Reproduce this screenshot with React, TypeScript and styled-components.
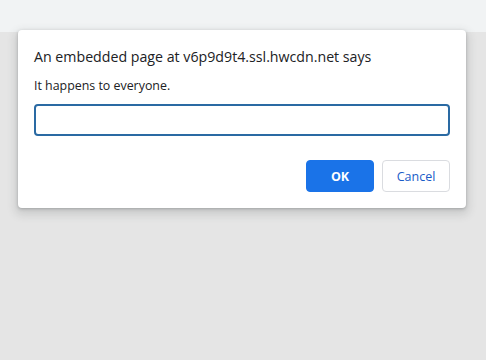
import React from 'react'
import styled, {createGlobalStyle} from 'styled-components'

const Global = createGlobalStyle`
    html, body {
        margin: 0;
        padding: 0;
        width: 486px;
        height: 360px;
        overflow: hidden;
        font-family: "Open Sans", "Noto Sans", sans-serif;
    }
`

const Page = styled.div`
    position: relative;
    width: 486px;
    height: 360px;
    display: flex;
    flex-direction: column;
    background: #e5e5e5;
`

const TopBar = styled.div`
    height: 32px;
    background: #f1f3f4;
`

const Dialog = styled.div`
    position: absolute;
    top: 30px;
    left: 18px;
    width: 448px;
    box-sizing: border-box;
    padding: 16px 16px 16px 16px;
    background: #fff;
    border-radius: 4px;
    box-shadow: 0 1px 3px rgba(60, 64, 67, 0.3), 0 4px 8px 3px rgba(60, 64, 67, 0.15);
    display: flex;
    flex-direction: column;
`

const Title = styled.div`
    font-size: 14.2px;
    color: #202124;
    line-height: 22px;
`

const Message = styled.div`
    margin-top: 8px;
    font-size: 12.4px;
    color: #202124;
    line-height: 20px;
`

const Field = styled.input`
    margin-top: 8px;
    height: 32px;
    box-sizing: border-box;
    border: 2px solid #2a6aa3;
    border-radius: 4px;
    outline: none;
    padding: 0 8px;
    font: inherit;
`

const Buttons = styled.div`
    margin-top: 24px;
    display: flex;
    justify-content: flex-end;
    gap: 8px;
`

const Button = styled.button<{$primary?: boolean}>`
    width: 68px;
    height: 32px;
    box-sizing: border-box;
    border-radius: 4px;
    font-family: inherit;
    font-size: 12.5px;
    font-weight: ${p => p.$primary ? 700 : 400};
    cursor: pointer;
    background: ${p => p.$primary ? '#1a73e8' : '#fff'};
    color: ${p => p.$primary ? '#fff' : '#1a5cc8'};
    border: 1px solid ${p => p.$primary ? '#1a73e8' : '#dadce0'};
`

export default function App () {
    return (
        <Page>
            <Global />
            <TopBar />
            <Dialog>
                <Title>An embedded page at v6p9d9t4.ssl.hwcdn.net says</Title>
                <Message>It happens to everyone.</Message>
                <Field />
                <Buttons>
                    <Button $primary>OK</Button>
                    <Button>Cancel</Button>
                </Buttons>
            </Dialog>
        </Page>
    )
}
